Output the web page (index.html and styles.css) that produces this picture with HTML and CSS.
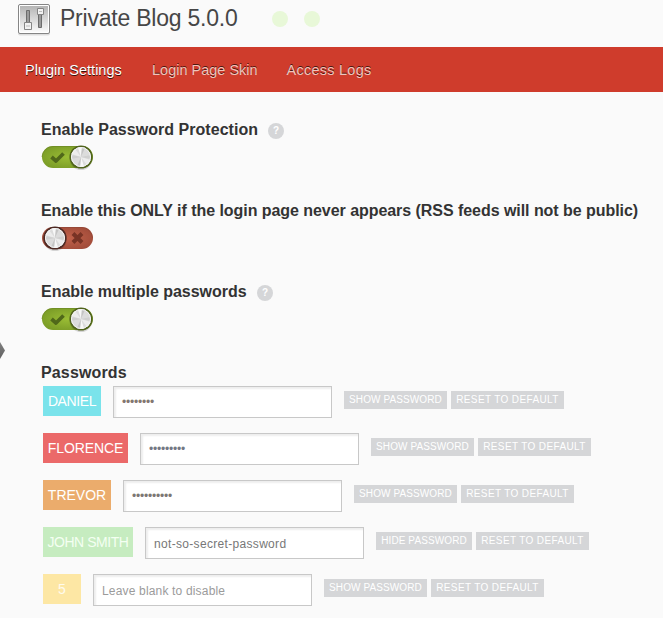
FILE: index.html
```html
<!DOCTYPE html>
<html lang="en">
<head>
<meta charset="utf-8">
<title>Private Blog 5.0.0</title>
<link rel="stylesheet" href="styles.css">
</head>
<body>
<svg width="0" height="0" class="defs">
  <defs>
    <linearGradient id="metal" x1="0" y1="0" x2="0" y2="1"><stop offset="0" stop-color="#b5b5b5"/><stop offset="1" stop-color="#fafafa"/></linearGradient>
    <radialGradient id="green" cx=".5" cy=".5" r=".6"><stop offset="0" stop-color="#9abd35"/><stop offset="1" stop-color="#799a26"/></radialGradient>
    <radialGradient id="red" cx=".5" cy=".5" r=".6"><stop offset="0" stop-color="#c2624b"/><stop offset="1" stop-color="#9f4a38"/></radialGradient>
    <linearGradient id="arrow" x1="0" y1="0" x2="0" y2="1"><stop offset="0" stop-color="#808080"/><stop offset="1" stop-color="#606060"/></linearGradient>
    <g id="knob">
      <circle r="10" fill="#dcdcdc"/>
      <path d="M0 0L-3-9.5A10 10 0 0 1 1-10ZM0 0L3 9.5A10 10 0 0 1-1 10Z" fill="#f8f8f8"/>
      <path d="M0 0L1-10A10 10 0 0 1 4-9.200ZM0 0L-1 10A10 10 0 0 1-4 9.200Z" fill="#c4c4c4"/>
      <path d="M0 0L9.5 3A10 10 0 0 1 6 8ZM0 0L-9.5-3A10 10 0 0 1-6-8Z" fill="#ededed"/>
      <path d="M0 0L-9.8 2A10 10 0 0 1-9.8-2ZM0 0L9.8-2A10 10 0 0 1 9.8 2Z" fill="#d0d0d0"/>
      <circle r="9.500" fill="none" stroke="#f4f4f4"/>
    </g>
    <g id="toggle-on">
      <rect x="1" y="2" width="51" height="22" rx="11" fill="url(#green)"/>
      <path d="M1 13A11 11 0 0 1 12 2.5H41" fill="none" stroke="#6c8923" stroke-opacity=".7"/>
      <path d="M10.5 13l4.5 4 7.500-7.500" fill="none" stroke="#50681a" stroke-width="3.700" stroke-linejoin="round"/>
      <circle cx="40" cy="14.500" r="11.500" fill="#000" opacity=".15"/>
      <circle cx="40" cy="13" r="11.500" fill="#50631d"/>
      <use href="#knob" x="40" y="13"/>
    </g>
    <g id="toggle-off">
      <rect x="1" y="2" width="51" height="22" rx="11" fill="url(#red)"/>
      <path d="M13 2.5H41A11 11 0 0 1 51.5 13" fill="none" stroke="#8d4435" stroke-opacity=".6"/>
      <path d="M32 8.5l9 9M41 8.5l-9 9" fill="none" stroke="#783325" stroke-width="4"/>
      <circle cx="14" cy="14.500" r="11.500" fill="#000" opacity=".15"/>
      <circle cx="14" cy="13" r="11.600" fill="#4d2a24"/>
      <use href="#knob" x="14" y="13"/>
    </g>
  </defs>
</svg>
<svg class="edge-arrow" width="6" height="20"><path d="M0 1L5 9.5 0 18Z" fill="url(#arrow)"/></svg>

<header class="title">
  <svg class="logo" width="34" height="34" viewBox="0 0 34 34">
    <rect x="1" y="2.500" width="32" height="31" rx="2" fill="#ddd"/>
    <rect x="1.5" y="2.500" width="31" height="29" rx="1.5" fill="#fff" stroke="#858585"/>
    <rect x="3" y="4" width="28" height="26" fill="url(#metal)"/>
    <path d="M9.5 8.500h3v14h-3zM21.500 10.500h3v15h-3z" fill="#9b9b9b" stroke="#6c6c6c"/>
    <path d="M7.500 20.500h7v7h-7zM20.500 6.500h6v6h-6z" fill="#f2f2f2" stroke="#858585"/>
    <path d="M9 24h4M22 9.500h3" stroke="#bbb"/>
  </svg>
  <h1>Private Blog 5.0.0</h1>
  <span class="dot"></span><span class="dot"></span>
</header>
<nav>
  <a class="active">Plugin Settings</a>
  <a class="skin">Login Page Skin</a>
  <a class="logs">Access Logs</a>
</nav>
<main>
  <section>
    <h2><span class="h-protection">Enable Password Protection</span><span class="help">?</span></h2>
    <svg class="toggle" width="54" height="28"><use href="#toggle-on"/></svg>
  </section>
  <section>
    <h2><span class="h-only">Enable this ONLY if the login page never appears (RSS feeds will not be public)</span></h2>
    <svg class="toggle" width="54" height="28"><use href="#toggle-off"/></svg>
  </section>
  <section>
    <h2><span class="h-multiple">Enable multiple passwords</span><span class="help">?</span></h2>
    <svg class="toggle" width="54" height="28"><use href="#toggle-on"/></svg>
  </section>
  <h2><span class="h-passwords">Passwords</span></h2>
  <div class="rows">
    <div class="row"><span class="name daniel">DANIEL</span><div class="field masked warm">••••••••</div><span class="btn show">SHOW PASSWORD</span><span class="btn reset">RESET TO DEFAULT</span></div>
    <div class="row"><span class="name florence">FLORENCE</span><div class="field masked cool">•••••••••</div><span class="btn show">SHOW PASSWORD</span><span class="btn reset">RESET TO DEFAULT</span></div>
    <div class="row"><span class="name trevor">TREVOR</span><div class="field masked">••••••••••</div><span class="btn show">SHOW PASSWORD</span><span class="btn reset">RESET TO DEFAULT</span></div>
    <div class="row"><span class="name john">JOHN SMITH</span><div class="field plain">not-so-secret-password</div><span class="btn hide">HIDE PASSWORD</span><span class="btn reset">RESET TO DEFAULT</span></div>
    <div class="row"><span class="name five">5</span><div class="field hint">Leave blank to disable</div><span class="btn show">SHOW PASSWORD</span><span class="btn reset">RESET TO DEFAULT</span></div>
  </div>
</main>
</body>
</html>
```
FILE: styles.css
```css
* { box-sizing: border-box; }
body { margin: 0; height: 618px; overflow: hidden; background: #fafafa; font-family: "Liberation Sans", Arial, sans-serif; color: #333; }
.defs { position: absolute; }
.edge-arrow { position: absolute; left: 0; top: 341px; }
.title { height: 47px; display: flex; padding-left: 17px; }
.logo { margin-top: 2px; flex: none; }
h1 { margin: 4px 0 0 9px; width: 212px; font-size: 23px; line-height: 28px; font-weight: 400; letter-spacing: -.22px; color: #464646; white-space: nowrap; }
.dot { width: 16px; height: 16px; border-radius: 50%; background: #e8f8d8; margin: 11px 16px 0 0; }
nav { height: 45px; background: #cf3c2c; display: flex; gap: 30px; padding-left: 25px; line-height: 46px; font-size: 14.5px; white-space: nowrap; color: #f0c4bc; text-shadow: 0 -1px 0 rgba(0,0,0,.65); }
nav .active { color: #fff; width: 97px; text-shadow: 0 1px 0 rgba(0,0,0,.75); }
nav .skin { width: 104.5px; }
nav .logs { letter-spacing: .25px; }
main { padding: 27px 0 0 41px; }
section { height: 81px; }
h2 { margin: 0; height: 22px; display: flex; font-size: 16px; line-height: 21px; white-space: nowrap; }
.help { width: 16px; height: 16px; margin: 4px 0 0 10px; border-radius: 50%; background: #d5d6d8; color: #fff; font-size: 10px; line-height: 16px; text-align: center; }
.h-protection { width: 217px; letter-spacing: .04px; }
.h-only { width: 598px; letter-spacing: -.05px; }
.h-multiple { width: 206px; letter-spacing: -.03px; }
.h-passwords { letter-spacing: .15px; }
.toggle { display: block; margin-top: 3px; }
.rows { padding: 2px 0 0 2px; }
.row { height: 47px; display: flex; align-items: flex-start; }
.name { height: 30px; line-height: 30px; color: #fff; font-size: 14px; text-align: center; white-space: nowrap; margin-right: 12px; }
.daniel { width: 58px; background: #7ae3eb; letter-spacing: -.4px; }
.florence { width: 85px; background: #eb6969; letter-spacing: -.1px; }
.trevor { width: 68px; background: #ebac6c; }
.john { width: 90px; background: #c6ecc0; letter-spacing: -.45px; color: #f4fff2; }
.five { width: 38px; background: #fde7a4; color: #fffbee; }
.field { width: 219px; height: 32px; border: 1px solid #c8c8c8; background: #fff; box-shadow: inset 2px 2px 2px #eee; padding-left: 8px; font-size: 12px; line-height: 33px; color: #777; margin-right: 12px; white-space: nowrap; }
.masked { letter-spacing: -.2px; line-height: 31px; color: #7c7773; }
.warm { color: #837770; }
.cool { color: #737883; }
.plain { letter-spacing: .32px; }
.hint { color: #9b9b9b; letter-spacing: .17px; }
.btn { height: 18px; margin: 5px 4px 0 0; background: #d5d6d8; color: #fff; font-size: 10px; line-height: 18px; text-align: center; white-space: nowrap; letter-spacing: .1px; }
.show { width: 103px; }
.hide { width: 96px; }
.reset { width: 113px; letter-spacing: .38px; }
```
